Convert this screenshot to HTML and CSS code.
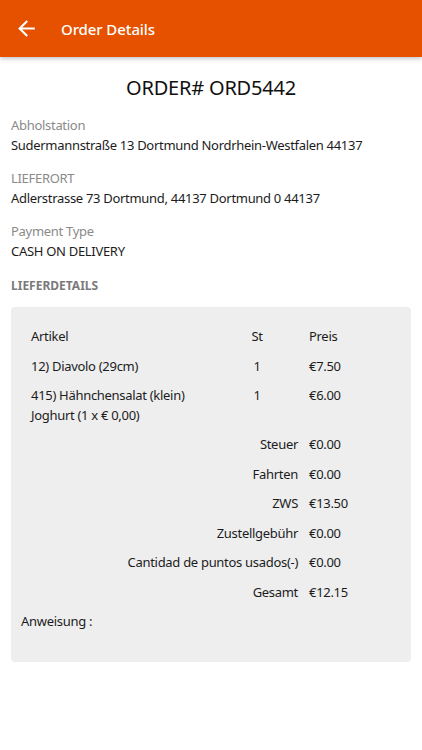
FILE: index.html
```html
<!DOCTYPE html>
<html lang="de">
<head>
<meta charset="utf-8">
<title>Order Details</title>
<link rel="stylesheet" href="styles.css">
</head>
<body>
<header class="appbar">
  <svg class="back" width="24" height="24" viewBox="0 0 24 24" aria-hidden="true">
    <path d="M20 11H7.83l5.59-5.59L12 4l-8 8 8 8 1.41-1.41L7.83 13H20v-2z" fill="#fff"/>
  </svg>
  <h1 class="title">Order Details</h1>
</header>
<main class="content">
  <h2 class="order-no">ORDER# ORD5442</h2>
  <section class="field">
    <div class="label">Abholstation</div>
    <div class="value">Sudermannstraße 13 Dortmund Nordrhein-Westfalen 44137</div>
  </section>
  <section class="field">
    <div class="label">LIEFERORT</div>
    <div class="value">Adlerstrasse 73 Dortmund, 44137 Dortmund 0 44137</div>
  </section>
  <section class="field">
    <div class="label">Payment Type</div>
    <div class="value">CASH ON DELIVERY</div>
  </section>
  <div class="section-title">LIEFERDETAILS</div>
  <div class="card">
    <div class="items">
      <div class="row">
        <span>Artikel</span><span class="qty">St</span><span class="price">Preis</span>
      </div>
      <div class="row">
        <span>12) Diavolo (29cm)</span><span class="qty">1</span><span class="price">€7.50</span>
      </div>
      <div class="row">
        <span>415) Hähnchensalat (klein)<br>Joghurt (1 x € 0,00)</span><span class="qty">1</span><span class="price">€6.00</span>
      </div>
    </div>
    <div class="totals">
      <div class="trow"><span class="tlabel">Steuer</span><span class="tval">€0.00</span></div>
      <div class="trow"><span class="tlabel">Fahrten</span><span class="tval">€0.00</span></div>
      <div class="trow"><span class="tlabel">ZWS</span><span class="tval">€13.50</span></div>
      <div class="trow"><span class="tlabel">Zustellgebühr</span><span class="tval">€0.00</span></div>
      <div class="trow"><span class="tlabel">Cantidad de puntos usados(-)</span><span class="tval">€0.00</span></div>
      <div class="trow"><span class="tlabel">Gesamt</span><span class="tval">€12.15</span></div>
    </div>
    <div class="note">Anweisung :</div>
  </div>
</main>
</body>
</html>
```

FILE: styles.css
```css
* { box-sizing: border-box; }
html, body {
  margin: 0;
  padding: 0;
  background: #ffffff;
}
body {
  font-family: "Noto Sans", "Open Sans", sans-serif;
  font-size: 13px;
  letter-spacing: -0.3px;
  color: #1c1c1c;
}
.appbar {
  height: 57px;
  background: #e65100;
  display: flex;
  align-items: center;
  padding-left: 14px;
  box-shadow: 0 2px 4px rgba(0, 0, 0, 0.22);
  position: relative;
}
.back {
  display: block;
  width: 25px;
  height: 25px;
}
.title {
  margin: 0 0 0 22px;
  color: #ffffff;
  font-size: 15px;
  font-weight: 500;
  letter-spacing: -0.1px;
}
.content {
  padding: 17px 11px 0;
}
.order-no {
  margin: 0;
  text-align: center;
  font-size: 20px;
  line-height: 28px;
  font-weight: 400;
  letter-spacing: -0.2px;
  color: #111;
}
.field {
  margin-top: 13px;
}
.label {
  color: #8a8a8a;
  line-height: 20px;
}
.value {
  line-height: 20px;
  color: #1c1c1c;
}
.section-title {
  margin-top: 15px;
  line-height: 20px;
  font-size: 12px;
  font-weight: 700;
  letter-spacing: 0;
  color: #7a7a7a;
}
.card {
  margin-top: 11px;
  background: #eeeeee;
  border-radius: 4px;
  padding: 15px 10px 25px;
}
.items {
  padding-left: 10px;
}
.row {
  display: grid;
  grid-template-columns: 1fr 32px 128px;
  padding: 5px 0;
  line-height: 19.5px;
}
.qty {
  text-align: center;
}
.price {
  padding-left: 36px;
}
.trow {
  display: grid;
  grid-template-columns: 1fr 92px;
  padding: 5px 0;
  line-height: 19.5px;
}
.tlabel {
  text-align: right;
  padding-right: 11px;
}
.note {
  padding: 5px 0;
  line-height: 19.5px;
}
```
